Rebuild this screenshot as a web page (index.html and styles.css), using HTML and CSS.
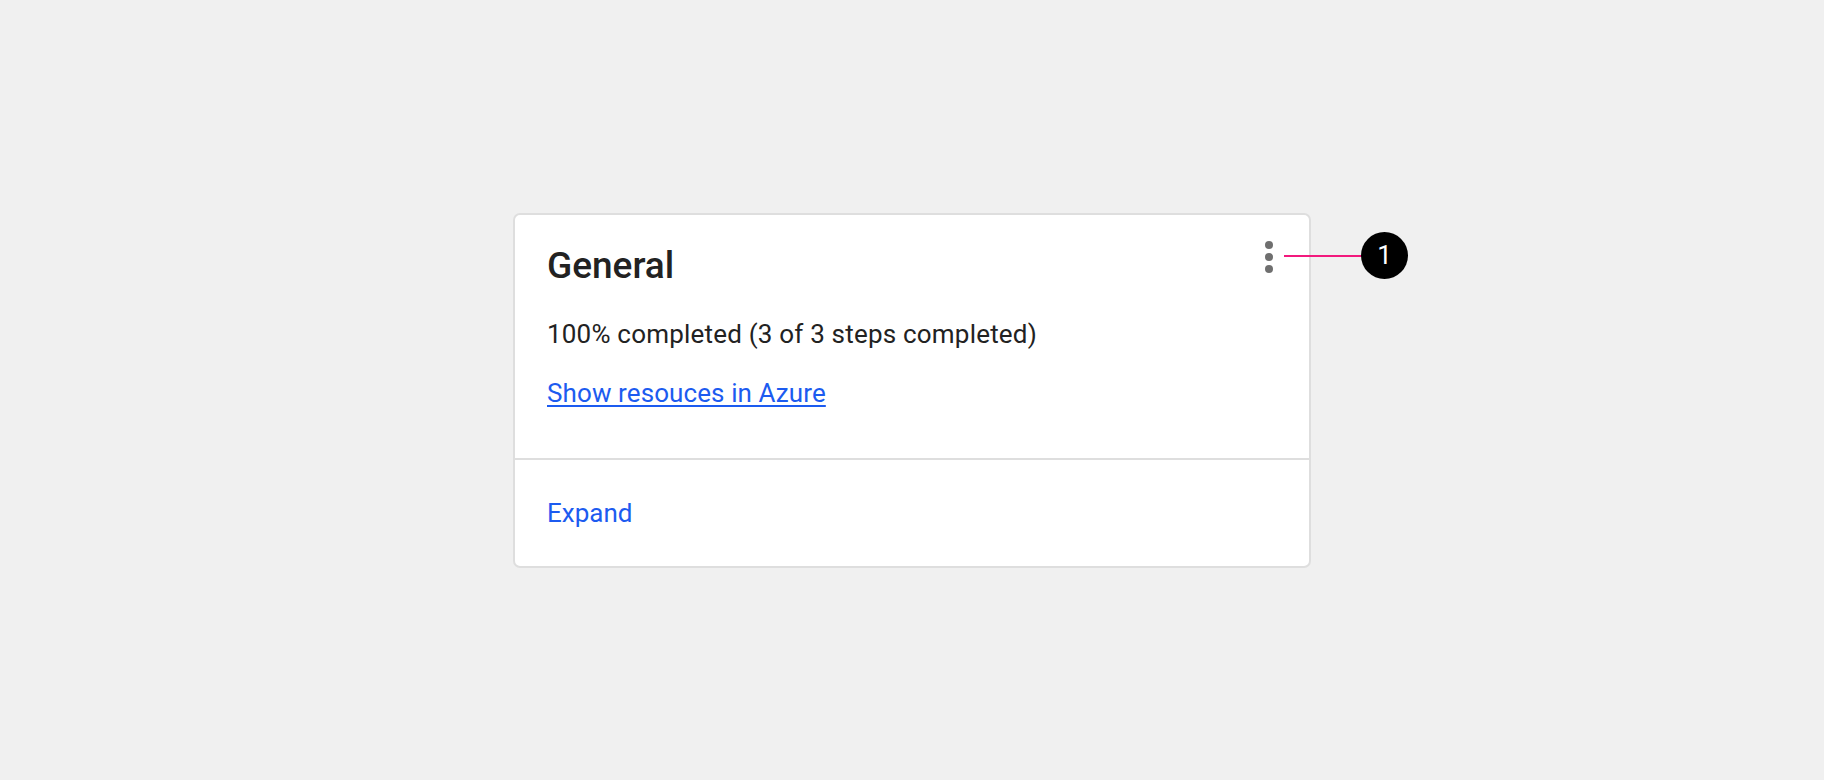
FILE: index.html
```html
<!DOCTYPE html>
<html lang="en">
<head>
<meta charset="utf-8">
<title>Card</title>
<link rel="stylesheet" href="styles.css">
</head>
<body>
<main class="stage">
  <section class="card">
    <div class="card-body">
      <div class="card-header">
        <h2 class="card-title">General</h2>
        <button class="kebab" aria-label="More options">
          <span class="dot"></span><span class="dot"></span><span class="dot"></span>
        </button>
      </div>
      <p class="card-text">100% completed (3 of 3 steps completed)</p>
      <a class="card-link" href="#">Show resouces in Azure</a>
    </div>
    <div class="card-footer">
      <a class="expand" href="#">Expand</a>
    </div>
    <div class="callout-line"></div>
    <div class="callout-badge">1</div>
  </section>
</main>
</body>
</html>
```
FILE: styles.css
```css
html, body {
  margin: 0;
  padding: 0;
}
body {
  background: #f0f0f0;
  font-family: Roboto, "Liberation Sans", sans-serif;
  color: #222222;
}
.stage {
  height: 780px;
  display: flex;
  align-items: center;
  justify-content: center;
}
.card {
  position: relative;
  width: 798px;
  box-sizing: border-box;
  background: #ffffff;
  border: 2px solid #dedede;
  border-radius: 7px;
}
.card-body {
  padding: 29px 28px 49px 32px;
  border-bottom: 2px solid #dedede;
}
.card-header {
  display: flex;
  justify-content: space-between;
  align-items: flex-start;
}
.card-title {
  margin: 0;
  font-size: 37px;
  line-height: 44px;
  font-weight: 500;
  color: #222222;
}
.kebab {
  margin-top: -3px;
  width: 24px;
  padding: 0;
  border: 0;
  background: none;
  display: flex;
  flex-direction: column;
  align-items: center;
  gap: 4px;
}
.dot {
  width: 8px;
  height: 8px;
  border-radius: 50%;
  background: #6f6f6f;
}
.card-text {
  margin: 30px 0 0;
  font-size: 26px;
  line-height: 32px;
  font-weight: 400;
  letter-spacing: 0.2px;
}
.card-link {
  display: inline-block;
  margin-top: 27px;
  font-size: 26px;
  line-height: 32px;
  color: #1c5bf0;
  text-decoration: underline;
  text-decoration-thickness: 2px;
  text-underline-offset: 3px;
  letter-spacing: 0.1px;
}
.card-footer {
  padding: 37px 32px 37px;
}
.expand {
  display: inline-block;
  font-size: 26px;
  line-height: 32px;
  color: #1c5bf0;
  text-decoration: none;
}
.callout-line {
  position: absolute;
  left: 769px;
  top: 40px;
  width: 80px;
  height: 2px;
  background: #f2197d;
}
.callout-badge {
  position: absolute;
  left: 846px;
  top: 17px;
  width: 47px;
  height: 47px;
  border-radius: 50%;
  background: #000000;
  color: #ffffff;
  font-size: 26px;
  line-height: 47px;
  text-align: center;
}
```
